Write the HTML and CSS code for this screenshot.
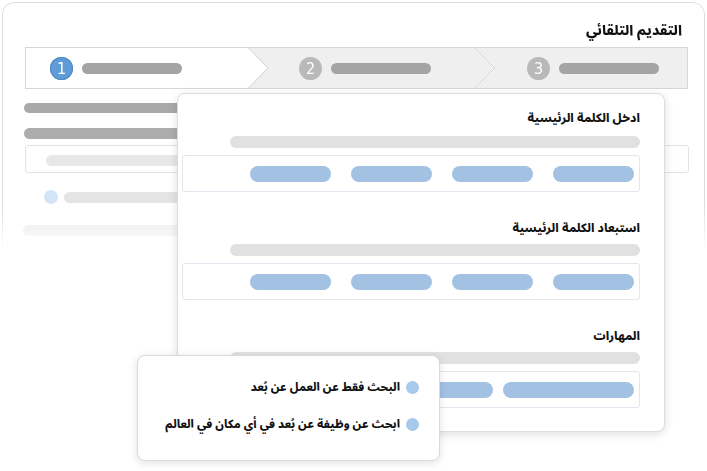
FILE: index.html
```html
<!DOCTYPE html>
<html lang="ar">
<head>
<meta charset="utf-8">
<title>التقديم التلقائي</title>
<link rel="stylesheet" href="styles.css">
</head>
<body>
<div class="stage">
  <div class="frame">
    <h1 class="title" dir="rtl">التقديم التلقائي</h1>
    <div class="stepper">
      <div class="step step-one">
        <span class="num num-active">1</span><span class="step-bar"></span>
      </div>
      <svg class="sep" width="20" height="40" viewBox="0 0 20 40">
        <polygon points="0,0 20,20 0,40" fill="#ffffff"/>
        <polyline points="0.5,0 20,20 0.5,40" fill="none" stroke="#d2d2d2" stroke-width="1"/>
      </svg>
      <div class="step step-two">
        <span class="num">2</span><span class="step-bar"></span>
      </div>
      <svg class="sep" width="20" height="40" viewBox="0 0 20 40">
        <polyline points="1.5,0 21,20 1.5,40" fill="none" stroke="#ffffff" stroke-width="1"/>
        <polyline points="0.5,0 20,20 0.5,40" fill="none" stroke="#d2d2d2" stroke-width="1"/>
      </svg>
      <div class="step step-three">
        <span class="num">3</span><span class="step-bar"></span>
      </div>
    </div>
    <div class="ghost">
      <div class="g-bar g-bar-1"></div>
      <div class="g-bar g-bar-2"></div>
      <div class="g-input"><div class="g-input-bar"></div></div>
      <div class="g-row"><span class="g-dot"></span><span class="g-row-bar"></span></div>
      <div class="g-faint"></div>
    </div>
  </div>

  <div class="panel">
    <section class="field field-first">
      <div class="label" dir="rtl">ادخل الكلمة الرئيسية</div>
      <div class="hint-bar"></div>
      <div class="chips">
        <span class="chip"></span><span class="chip"></span><span class="chip"></span><span class="chip"></span>
      </div>
    </section>
    <section class="field">
      <div class="label" dir="rtl">استبعاد الكلمة الرئيسية</div>
      <div class="hint-bar"></div>
      <div class="chips">
        <span class="chip"></span><span class="chip"></span><span class="chip"></span><span class="chip"></span>
      </div>
    </section>
    <section class="field">
      <div class="label" dir="rtl">المهارات</div>
      <div class="hint-bar"></div>
      <div class="chips chips-wide">
        <span class="chip chip-wide"></span><span class="chip chip-wide"></span>
      </div>
    </section>
  </div>

  <div class="popover" dir="rtl">
    <div class="option"><span class="opt-dot"></span><span class="opt-text">البحث فقط عن العمل عن بُعد</span></div>
    <div class="option"><span class="opt-dot"></span><span class="opt-text">ابحث عن وظيفة عن بُعد في أي مكان في العالم</span></div>
  </div>
</div>
</body>
</html>
```

FILE: styles.css
```css
* { box-sizing: border-box; }

html, body {
  margin: 0;
  padding: 0;
  background: #ffffff;
}

body {
  font-family: "Noto Sans Arabic", "Noto Kufi Arabic", "DejaVu Sans", sans-serif;
  color: #111111;
}

.stage {
  position: relative;
  width: 707px;
  height: 471px;
  overflow: hidden;
  background: #ffffff;
}

/* outer card, fading out toward the bottom */
.frame {
  margin: 2px 2px 0 2px;
  height: 262px;
  border: 1px solid #dcdcdc;
  border-radius: 12px;
  padding: 18px 16px 0 22px;
  -webkit-mask-image: linear-gradient(to bottom, #000 0, #000 200px, transparent 248px);
  mask-image: linear-gradient(to bottom, #000 0, #000 200px, transparent 248px);
}

.title {
  margin: 0;
  padding-right: 6px;
  font-size: 14px;
  line-height: 20px;
  font-weight: 800;
  text-align: right;
  color: #111111;
}

/* stepper */
.stepper {
  margin-top: 6px;
  height: 42px;
  display: flex;
  border: 1px solid #d6d6d6;
  background: #efefef;
}

.step {
  display: flex;
  align-items: center;
  gap: 9px;
  height: 40px;
}

.step-one { width: 222px; padding-left: 24px; background: #ffffff; }
.step-two { width: 207px; padding-left: 31px; }
.step-three { flex: 1; padding-left: 32px; }

.sep { display: block; flex: none; }

.num {
  width: 23px;
  height: 23px;
  border-radius: 50%;
  background: #b9b9b9;
  color: #ffffff;
  font-family: "DejaVu Sans Condensed", "DejaVu Sans", sans-serif;
  font-size: 16px;
  line-height: 23px;
  text-align: center;
  flex: none;
}

.num-active {
  background: #5e9bd7;
  box-shadow: inset 0 0 0 1px #4f8bc7;
}

.step-bar {
  width: 100px;
  height: 11px;
  border-radius: 6px;
  background: #a4a4a4;
  flex: none;
}

/* faded content behind the panel */
.ghost { display: flex; flex-direction: column; }

.g-bar {
  width: 420px;
  height: 10px;
  border-radius: 6px;
  margin-left: -1px;
}
.g-bar-1 { margin-top: 14px; background: #a9a9a9; }
.g-bar-2 { margin-top: 15px; height: 11px; background: #adadad; }

.g-input {
  margin-top: 6px;
  margin-right: -1px;
  height: 28px;
  border: 1px solid #e3e3e3;
  border-radius: 3px;
  padding: 9px 0 0 20px;
}
.g-input-bar {
  width: 400px;
  height: 11px;
  border-radius: 6px;
  background: #e8e8e8;
}

.g-row {
  margin-top: 17px;
  padding-left: 19px;
  display: flex;
  align-items: center;
  gap: 6px;
}
.g-dot {
  width: 14px;
  height: 14px;
  border-radius: 50%;
  background: #d3e4f6;
}
.g-row-bar {
  width: 400px;
  height: 11px;
  border-radius: 6px;
  background: #e4e4e4;
}

.g-faint {
  margin-top: 21px;
  margin-left: -2px;
  width: 420px;
  height: 11px;
  border-radius: 6px;
  background: #e6e6e6;
}

/* floating form panel */
.panel {
  position: absolute;
  left: 177px;
  top: 93px;
  width: 488px;
  height: 339px;
  background: #ffffff;
  border: 1px solid #dddddd;
  border-radius: 8px;
  box-shadow: 0 2px 10px rgba(0, 0, 0, 0.13);
  padding: 17px 24px 0 4px;
  display: flex;
  flex-direction: column;
}

.field { display: flex; flex-direction: column; margin-top: 29px; }
.field-first { margin-top: 0; }

.label {
  font-size: 12px;
  line-height: 16px;
  font-weight: 800;
  text-align: right;
  color: #111111;
}

.hint-bar {
  margin-top: 7px;
  margin-left: auto;
  width: 410px;
  height: 12px;
  border-radius: 6px;
  background: #e1e1e1;
}
.field-first .hint-bar { margin-top: 9px; }

.chips {
  margin-top: 7px;
  height: 37px;
  border: 1px solid #e2e6ee;
  border-radius: 3px;
  display: flex;
  align-items: center;
  justify-content: flex-end;
  gap: 20px;
  padding-right: 5px;
}

.chips-wide { gap: 10px; }

.chip {
  width: 81px;
  height: 16px;
  border-radius: 8px;
  background: #a3c1e3;
  flex: none;
}
.chip-wide { width: 131px; }

/* dropdown popover */
.popover {
  position: absolute;
  left: 137px;
  top: 355px;
  width: 303px;
  height: 106px;
  background: #ffffff;
  border: 1px solid #dadada;
  border-radius: 8px;
  box-shadow: 0 2px 8px rgba(0, 0, 0, 0.12);
  padding: 20px 20px 0 0;
  display: flex;
  flex-direction: column;
  gap: 15px;
}

.option {
  display: flex;
  align-items: center;
  gap: 6px;
  height: 22px;
}

.opt-dot {
  width: 13px;
  height: 13px;
  border-radius: 50%;
  background: #a7c9ed;
  flex: none;
}

.opt-text {
  font-size: 11.5px;
  line-height: 22px;
  font-weight: 800;
  color: #111111;
  white-space: nowrap;
}
```
